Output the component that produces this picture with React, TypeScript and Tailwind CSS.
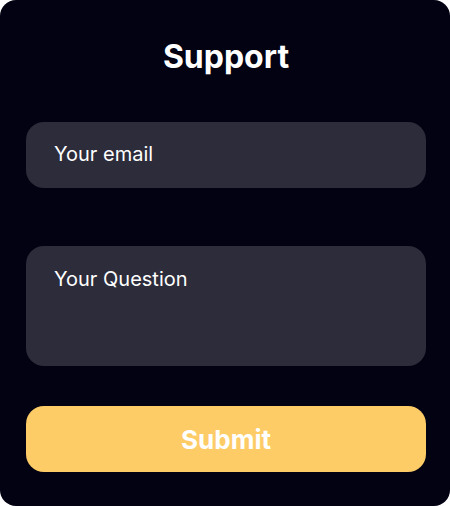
import React from 'react';

export default function App() {
  return (
    <div className="w-[450px] h-[506px] bg-white">
      <div
        className="w-full h-full bg-[#020213] rounded-[16px] flex flex-col pl-[26px] pr-[24px]"
        style={{ fontFamily: 'Inter, "Noto Sans", sans-serif' }}
      >
        <h1 className="pt-[38px] text-center text-white text-[32px] leading-[38px] font-bold">
          Support
        </h1>

        <input
          type="email"
          placeholder="Your email"
          className="mt-[46px] h-[66px] w-full rounded-[18px] bg-[#2c2c3a] px-[28px] pb-[3px] text-[20px] text-white placeholder:text-white outline-none"
        />

        <textarea
          placeholder="Your Question"
          className="mt-[58px] h-[120px] w-full resize-none rounded-[18px] bg-[#2c2c3a] px-[28px] pt-[19px] text-[20px] leading-[28px] text-white placeholder:text-white outline-none"
        />

        <button className="mt-[40px] h-[66px] w-full rounded-[18px] bg-[#fecc66] text-white text-[26px] font-bold">
          Submit
        </button>
      </div>
    </div>
  );
}
